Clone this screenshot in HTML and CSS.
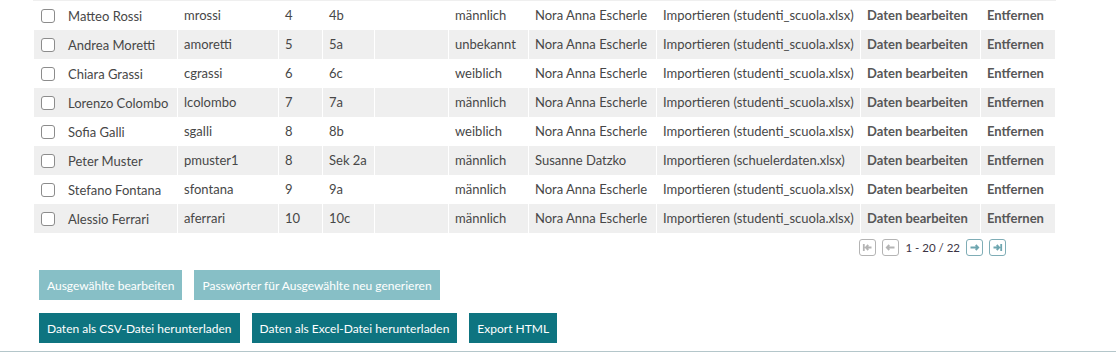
FILE: index.html
```html
<!DOCTYPE html>
<html lang="de">
    <head>
        <meta charset="UTF-8" />
        <title>Schüler</title>
        <link rel="stylesheet" href="styles.css">
    </head>
    <body>
        <div class="page">
            <table class="students">
                <colgroup>
                    <col class="c-name">
                    <col class="c-login">
                    <col class="c-year">
                    <col class="c-class">
                    <col class="c-empty">
                    <col class="c-gender">
                    <col class="c-teacher">
                    <col class="c-source">
                    <col class="c-edit">
                    <col class="c-remove">
                </colgroup>
                <tbody>
                    <tr>
                        <td><input type="checkbox" class="check"><span class="name">Matteo Rossi</span></td>
                        <td>mrossi</td><td>4</td><td>4b</td><td></td><td>männlich</td>
                        <td>Nora Anna Escherle</td><td>Importieren (studenti_scuola.xlsx)</td>
                        <td><a href="#" class="action">Daten bearbeiten</a></td><td><a href="#" class="action">Entfernen</a></td>
                    </tr>
                    <tr>
                        <td><input type="checkbox" class="check"><span class="name">Andrea Moretti</span></td>
                        <td>amoretti</td><td>5</td><td>5a</td><td></td><td>unbekannt</td>
                        <td>Nora Anna Escherle</td><td>Importieren (studenti_scuola.xlsx)</td>
                        <td><a href="#" class="action">Daten bearbeiten</a></td><td><a href="#" class="action">Entfernen</a></td>
                    </tr>
                    <tr>
                        <td><input type="checkbox" class="check"><span class="name">Chiara Grassi</span></td>
                        <td>cgrassi</td><td>6</td><td>6c</td><td></td><td>weiblich</td>
                        <td>Nora Anna Escherle</td><td>Importieren (studenti_scuola.xlsx)</td>
                        <td><a href="#" class="action">Daten bearbeiten</a></td><td><a href="#" class="action">Entfernen</a></td>
                    </tr>
                    <tr>
                        <td><input type="checkbox" class="check"><span class="name">Lorenzo Colombo</span></td>
                        <td>lcolombo</td><td>7</td><td>7a</td><td></td><td>männlich</td>
                        <td>Nora Anna Escherle</td><td>Importieren (studenti_scuola.xlsx)</td>
                        <td><a href="#" class="action">Daten bearbeiten</a></td><td><a href="#" class="action">Entfernen</a></td>
                    </tr>
                    <tr>
                        <td><input type="checkbox" class="check"><span class="name">Sofia Galli</span></td>
                        <td>sgalli</td><td>8</td><td>8b</td><td></td><td>weiblich</td>
                        <td>Nora Anna Escherle</td><td>Importieren (studenti_scuola.xlsx)</td>
                        <td><a href="#" class="action">Daten bearbeiten</a></td><td><a href="#" class="action">Entfernen</a></td>
                    </tr>
                    <tr>
                        <td><input type="checkbox" class="check"><span class="name">Peter Muster</span></td>
                        <td>pmuster1</td><td>8</td><td>Sek 2a</td><td></td><td>männlich</td>
                        <td>Susanne Datzko</td><td>Importieren (schuelerdaten.xlsx)</td>
                        <td><a href="#" class="action">Daten bearbeiten</a></td><td><a href="#" class="action">Entfernen</a></td>
                    </tr>
                    <tr>
                        <td><input type="checkbox" class="check"><span class="name">Stefano Fontana</span></td>
                        <td>sfontana</td><td>9</td><td>9a</td><td></td><td>männlich</td>
                        <td>Nora Anna Escherle</td><td>Importieren (studenti_scuola.xlsx)</td>
                        <td><a href="#" class="action">Daten bearbeiten</a></td><td><a href="#" class="action">Entfernen</a></td>
                    </tr>
                    <tr>
                        <td><input type="checkbox" class="check"><span class="name">Alessio Ferrari</span></td>
                        <td>aferrari</td><td>10</td><td>10c</td><td></td><td>männlich</td>
                        <td>Nora Anna Escherle</td><td>Importieren (studenti_scuola.xlsx)</td>
                        <td><a href="#" class="action">Daten bearbeiten</a></td><td><a href="#" class="action">Entfernen</a></td>
                    </tr>
                </tbody>
            </table>

            <div class="pager">
                <button class="pager-btn" disabled>
                    <svg viewBox="0 0 15 15" width="15" height="15"><path d="M3.8 4v7M11.5 7.5H5.8M8.3 5 5.8 7.5 8.3 10" /></svg>
                </button>
                <button class="pager-btn" disabled>
                    <svg viewBox="0 0 15 15" width="15" height="15"><path d="M11.5 7.5H3.8M6.3 5 3.8 7.5 6.3 10" /></svg>
                </button>
                <span class="pager-info">1 - 20 / 22</span>
                <button class="pager-btn active">
                    <svg viewBox="0 0 15 15" width="15" height="15"><path d="M3.5 7.5h7.7M8.7 5l2.5 2.5L8.7 10" /></svg>
                </button>
                <button class="pager-btn active">
                    <svg viewBox="0 0 15 15" width="15" height="15"><path d="M11.2 4v7M3.5 7.5h5.7M6.7 5l2.5 2.5L6.7 10" /></svg>
                </button>
            </div>

            <div class="actions">
                <button class="btn btn-light">Ausgewählte bearbeiten</button>
                <button class="btn btn-light">Passwörter für Ausgewählte neu generieren</button>
            </div>
            <div class="actions">
                <button class="btn btn-dark">Daten als CSV-Datei herunterladen</button>
                <button class="btn btn-dark">Daten als Excel-Datei herunterladen</button>
                <button class="btn btn-dark">Export HTML</button>
            </div>
        </div>
        <div class="footer-line"></div>
    </body>
</html>
```

FILE: styles.css
```css
body {
    margin: 0;
    font-family: Lato, "Open Sans", sans-serif;
    color: #474747;
    background: #ffffff;
}

.page {
    padding-left: 33px;
}

.students {
    table-layout: fixed;
    width: 1023px;
    border-collapse: separate;
    border-spacing: 1px 0;
    border-top: 1px solid #efefef;
    font-size: 13px;
}

.c-name { width: 143px; }
.c-login { width: 100px; }
.c-year { width: 43px; }
.c-class { width: 51px; }
.c-empty { width: 73px; }
.c-gender { width: 79px; }
.c-teacher { width: 127px; }
.c-source { width: 203px; }
.c-edit { width: 119px; }
.c-remove { width: 74px; }

.students td {
    height: 28px;
    padding: 0 0 1px 6px;
    white-space: nowrap;
    overflow: hidden;
    vertical-align: middle;
}

.students tr:nth-child(even) td {
    background: #efefef;
}

.students td:first-child {
    padding-left: 7px;
}

.check {
    appearance: none;
    width: 14px;
    height: 14px;
    margin: 0 13px 0 0;
    border: 1px solid #8c8c8c;
    border-radius: 3px;
    background: #ffffff;
    vertical-align: middle;
}

.name {
    vertical-align: middle;
}

.action {
    color: #575757;
    font-weight: bold;
    text-decoration: none;
}

.pager {
    display: flex;
    align-items: center;
    justify-content: flex-end;
    width: 1023px;
    padding-right: 50px;
    box-sizing: border-box;
    margin-top: 6px;
    gap: 6px;
}

.pager-btn {
    width: 17px;
    height: 17px;
    padding: 0;
    border: 1px solid #b4b4b4;
    border-radius: 3px;
    background: #ffffff;
    display: flex;
    align-items: center;
    justify-content: center;
}

.pager-btn svg {
    display: block;
    fill: none;
    stroke: #b4b4b4;
    stroke-width: 1.8;
}

.pager-btn.active {
    border-color: #7fadb6;
}

.pager-btn.active svg {
    stroke: #6ea6b0;
}

.pager-info {
    font-size: 11.5px;
    color: #3c3444;
}

.actions {
    display: flex;
    gap: 12px;
    margin-left: 6px;
    margin-top: 13px;
}

.pager + .actions {
    margin-top: 14px;
}

.btn {
    height: 30px;
    padding: 0 8px;
    border: none;
    font-family: Lato, "Open Sans", sans-serif;
    font-size: 12px;
    color: #ffffff;
}

.btn-light {
    background: #87bfc6;
}

.btn-dark {
    background: #0e7480;
}

.footer-line {
    margin-top: 8px;
    height: 1px;
    background: #b4c6ca;
}
```
